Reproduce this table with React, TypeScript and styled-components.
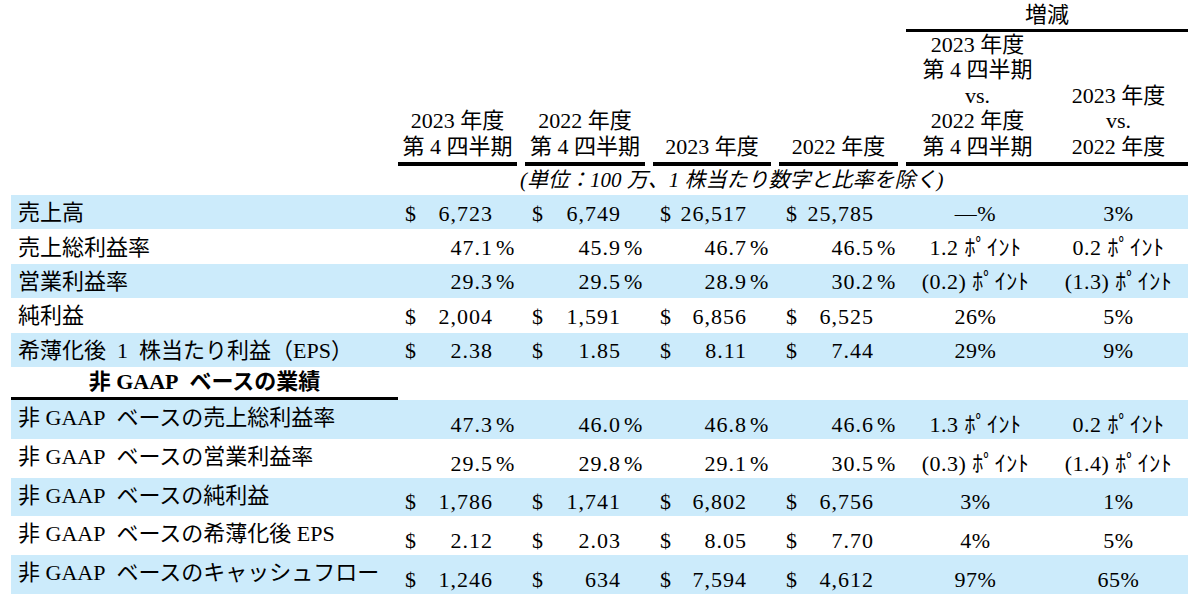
import styled, { createGlobalStyle } from "styled-components";

const GlobalStyle = createGlobalStyle`
  body {
    margin: 0;
    background: #ffffff;
    color: #000000;
    font-family: "Liberation Serif", "Noto Sans CJK JP", serif;
  }
`;

const COLS = "383px 127px 128px 126px 127px 147px 139px";
const SHADE = "#ccebfb";

const Sheet = styled.div`
  width: 1177px;
  padding-left: 11px;
  font-size: 22px;
  line-height: 24px;
`;

const HeaderRow = styled.div`
  display: grid;
  grid-template-columns: ${COLS};
  height: 166px;
  align-items: end;
`;

const HeadCell = styled.div`
  margin: 0 4px;
  padding-bottom: 3px;
  border-bottom: 4px solid #000;
  text-align: center;
  line-height: 25.5px;
  white-space: nowrap;
`;

const Group = styled.div`
  grid-column: span 2;
  margin-left: 4px;
  padding-bottom: 3px;
  border-bottom: 4px solid #000;
`;

const GroupTitle = styled.div`
  line-height: 28px;
  text-align: center;
  border-bottom: 3px solid #000;
`;

const GroupCols = styled.div`
  display: grid;
  grid-template-columns: 143px 139px;
  align-items: end;
  text-align: center;
  line-height: 25.5px;
  white-space: nowrap;
`;

const Note = styled.div`
  height: 29px;
  line-height: 29px;
  padding-left: 509px;
  font-size: 21px;
  font-style: italic;
  white-space: nowrap;
`;

const Row = styled.div<{ $shade?: boolean; $tall?: boolean }>`
  display: grid;
  grid-template-columns: ${COLS};
  height: ${(p) => (p.$tall ? "38.8px" : "34.4px")};
  background: ${(p) => (p.$shade ? SHADE : "transparent")};
`;

const Label = styled.div<{ $tall?: boolean }>`
  padding-left: 7px;
  white-space: nowrap;
  align-self: ${(p) => (p.$tall ? "start" : "center")};
  padding-top: ${(p) => (p.$tall ? "6px" : "2px")};
`;

const Value = styled.div<{ $tall?: boolean }>`
  display: flex;
  align-items: baseline;
  padding: 0 3px 0 11px;
  letter-spacing: 1px;
  white-space: nowrap;
  align-self: ${(p) => (p.$tall ? "end" : "center")};
  padding-bottom: ${(p) => (p.$tall ? "2px" : "0")};
  padding-top: ${(p) => (p.$tall ? "0" : "3px")};
`;

const Sign = styled.span``;

const Amount = styled.span`
  flex: 1;
  text-align: right;
`;

const Suffix = styled.span`
  width: 25px;
  padding-left: 3px;
  box-sizing: border-box;
  letter-spacing: 0;
`;

const Change = styled.div<{ $tall?: boolean }>`
  text-align: center;
  white-space: nowrap;
  letter-spacing: 0.5px;
  align-self: ${(p) => (p.$tall ? "end" : "center")};
  padding-bottom: ${(p) => (p.$tall ? "2px" : "0")};
  padding-top: ${(p) => (p.$tall ? "0" : "3px")};
`;

const SectionRow = styled.div`
  display: grid;
  grid-template-columns: ${COLS};
  height: 33px;
`;

const SectionTitle = styled.div`
  margin-right: -4px;
  border-bottom: 3px solid #000;
  text-align: center;
  font-weight: bold;
  line-height: 30px;
  white-space: nowrap;
`;

type Line = {
  label: string;
  values: string[];
  changes: [string, string];
};

const gaap: Line[] = [
  { label: "売上高", values: ["$6,723", "$6,749", "$26,517", "$25,785"], changes: ["—%", "3%"] },
  { label: "売上総利益率", values: ["47.1%", "45.9%", "46.7%", "46.5%"], changes: ["1.2 ﾎﾟｲﾝﾄ", "0.2 ﾎﾟｲﾝﾄ"] },
  { label: "営業利益率", values: ["29.3%", "29.5%", "28.9%", "30.2%"], changes: ["(0.2) ﾎﾟｲﾝﾄ", "(1.3) ﾎﾟｲﾝﾄ"] },
  { label: "純利益", values: ["$2,004", "$1,591", "$6,856", "$6,525"], changes: ["26%", "5%"] },
  { label: "希薄化後\u20021\u2002株当たり利益（EPS）", values: ["$2.38", "$1.85", "$8.11", "$7.44"], changes: ["29%", "9%"] },
];

const nonGaap: Line[] = [
  { label: "非 GAAP\u2002ベースの売上総利益率", values: ["47.3%", "46.0%", "46.8%", "46.6%"], changes: ["1.3 ﾎﾟｲﾝﾄ", "0.2 ﾎﾟｲﾝﾄ"] },
  { label: "非 GAAP\u2002ベースの営業利益率", values: ["29.5%", "29.8%", "29.1%", "30.5%"], changes: ["(0.3) ﾎﾟｲﾝﾄ", "(1.4) ﾎﾟｲﾝﾄ"] },
  { label: "非 GAAP\u2002ベースの純利益", values: ["$1,786", "$1,741", "$6,802", "$6,756"], changes: ["3%", "1%"] },
  { label: "非 GAAP\u2002ベースの希薄化後 EPS", values: ["$2.12", "$2.03", "$8.05", "$7.70"], changes: ["4%", "5%"] },
  { label: "非 GAAP\u2002ベースのキャッシュフロー", values: ["$1,246", "$634", "$7,594", "$4,612"], changes: ["97%", "65%"] },
];

function Cell({ text, tall }: { text: string; tall?: boolean }) {
  const money = text.startsWith("$");
  const pct = text.endsWith("%");
  const body = text.replace("$", "").replace("%", "");
  return (
    <Value $tall={tall}>
      <Sign>{money ? "$" : ""}</Sign>
      <Amount>{body}</Amount>
      <Suffix>{pct ? "%" : ""}</Suffix>
    </Value>
  );
}

function Lines({ rows, tall }: { rows: Line[]; tall?: boolean }) {
  return (
    <>
      {rows.map((r, i) => (
        <Row key={r.label} $shade={i % 2 === 0} $tall={tall}>
          <Label $tall={tall}>{r.label}</Label>
          {r.values.map((v, j) => (
            <Cell key={j} text={v} tall={tall} />
          ))}
          <Change $tall={tall}>{r.changes[0]}</Change>
          <Change $tall={tall}>{r.changes[1]}</Change>
        </Row>
      ))}
    </>
  );
}

export default function App() {
  return (
    <>
      <GlobalStyle />
      <Sheet>
        <HeaderRow>
          <div />
          <HeadCell>
            2023 年度
            <br />第 4 四半期
          </HeadCell>
          <HeadCell>
            2022 年度
            <br />第 4 四半期
          </HeadCell>
          <HeadCell>2023 年度</HeadCell>
          <HeadCell>2022 年度</HeadCell>
          <Group>
            <GroupTitle>増減</GroupTitle>
            <GroupCols>
              <div>
                2023 年度
                <br />第 4 四半期
                <br />
                vs.
                <br />
                2022 年度
                <br />第 4 四半期
              </div>
              <div>
                2023 年度
                <br />
                vs.
                <br />
                2022 年度
              </div>
            </GroupCols>
          </Group>
        </HeaderRow>
        <Note>(単位：100 万、1 株当たり数字と比率を除く)</Note>
        <Lines rows={gaap} />
        <SectionRow>
          <SectionTitle>非 GAAP&#8194;ベースの業績</SectionTitle>
        </SectionRow>
        <Lines rows={nonGaap} tall />
      </Sheet>
    </>
  );
}
